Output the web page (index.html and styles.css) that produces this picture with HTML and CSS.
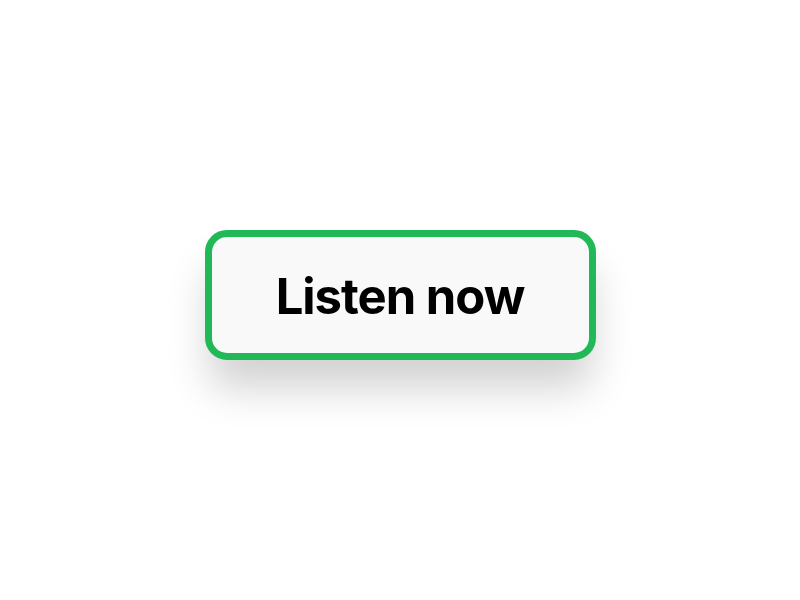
FILE: index.html
```html
<!DOCTYPE html>
<html>
<head>
<meta charset="utf-8">
<link rel="stylesheet" href="styles.css">
</head>
<body>
<div class="stage">
  <button class="listen-btn">Listen now</button>
</div>
</body>
</html>
```
FILE: styles.css
```css
html, body {
  margin: 0;
  padding: 0;
  background: #ffffff;
}
.stage {
  width: 800px;
  height: 600px;
  display: flex;
  align-items: center;
  justify-content: center;
  padding-bottom: 10px;
  box-sizing: border-box;
}
.listen-btn {
  width: 391px;
  height: 130px;
  box-sizing: border-box;
  border: 7px solid #21b858;
  border-radius: 22px;
  background: #f9f9f9;
  box-shadow: 0 32px 42px -4px rgba(0, 0, 0, 0.18);
  font-family: "Inter", sans-serif;
  font-weight: 700;
  font-size: 49px;
  color: #000;
  letter-spacing: -1px;
  padding: 2px 0 0 0;
  cursor: pointer;
}
```
